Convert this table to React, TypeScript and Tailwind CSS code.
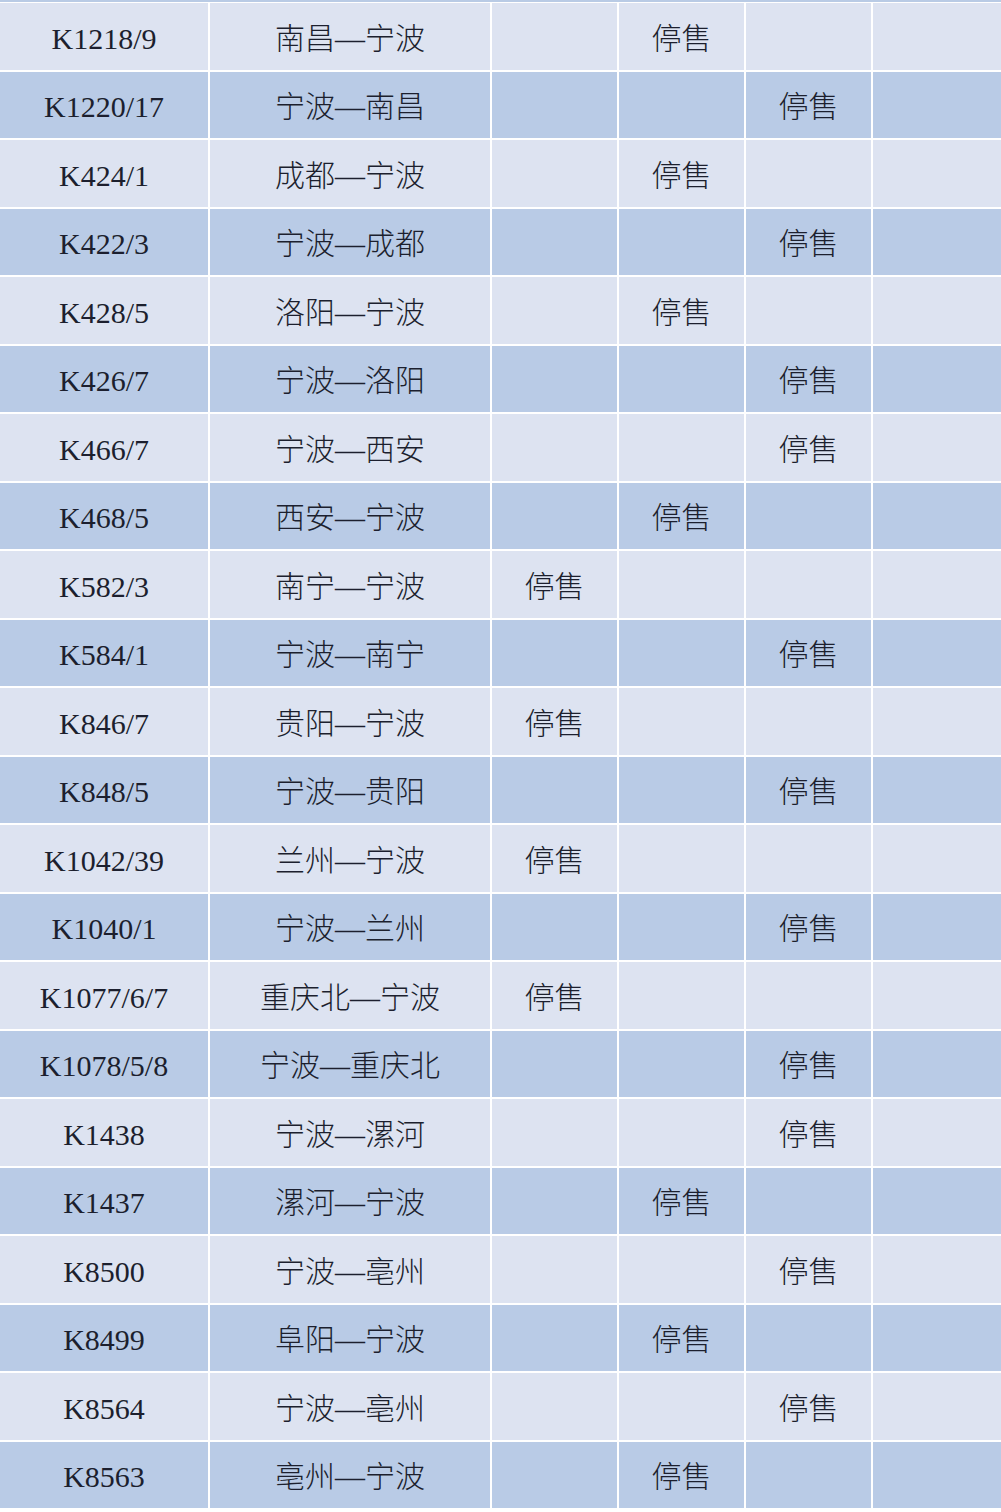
const rows: [string, string, number][] = [
  ['K1218/9', '南昌—宁波', 4],
  ['K1220/17', '宁波—南昌', 5],
  ['K424/1', '成都—宁波', 4],
  ['K422/3', '宁波—成都', 5],
  ['K428/5', '洛阳—宁波', 4],
  ['K426/7', '宁波—洛阳', 5],
  ['K466/7', '宁波—西安', 5],
  ['K468/5', '西安—宁波', 4],
  ['K582/3', '南宁—宁波', 3],
  ['K584/1', '宁波—南宁', 5],
  ['K846/7', '贵阳—宁波', 3],
  ['K848/5', '宁波—贵阳', 5],
  ['K1042/39', '兰州—宁波', 3],
  ['K1040/1', '宁波—兰州', 5],
  ['K1077/6/7', '重庆北—宁波', 3],
  ['K1078/5/8', '宁波—重庆北', 5],
  ['K1438', '宁波—漯河', 5],
  ['K1437', '漯河—宁波', 4],
  ['K8500', '宁波—亳州', 5],
  ['K8499', '阜阳—宁波', 4],
  ['K8564', '宁波—亳州', 5],
  ['K8563', '亳州—宁波', 4],
]

const font = { fontFamily: '"Liberation Serif", "Noto Sans CJK SC", serif' }

export default function App() {
  return (
    <div className="w-[1001px] h-[1512px] overflow-hidden bg-white text-[30px] text-[#1c1f2e]" style={font}>
      <div className="h-[2px] bg-[#b9cbe5]" />
      <div className="mt-[1px] flex flex-col gap-y-[2px]">
        {rows.map(([no, route, col], i) => {
          const bg = i % 2 === 0 ? 'bg-[#dde3f1]' : 'bg-[#b9cbe6]'
          return (
            <div key={no} className="grid grid-cols-[208px_280px_125px_125px_125px_1fr] gap-x-[2px] h-[66.5px]">
              <div className={`${bg} flex items-center justify-center pt-[4px]`}>{no}</div>
              <div className={`${bg} flex items-center justify-center pt-[4px] font-light`}>{route}</div>
              {[3, 4, 5, 6].map((c) => (
                <div key={c} className={`${bg} flex items-center justify-center pt-[4px] font-light`}>
                  {c === col ? '停售' : ''}
                </div>
              ))}
            </div>
          )
        })}
      </div>
    </div>
  )
}
